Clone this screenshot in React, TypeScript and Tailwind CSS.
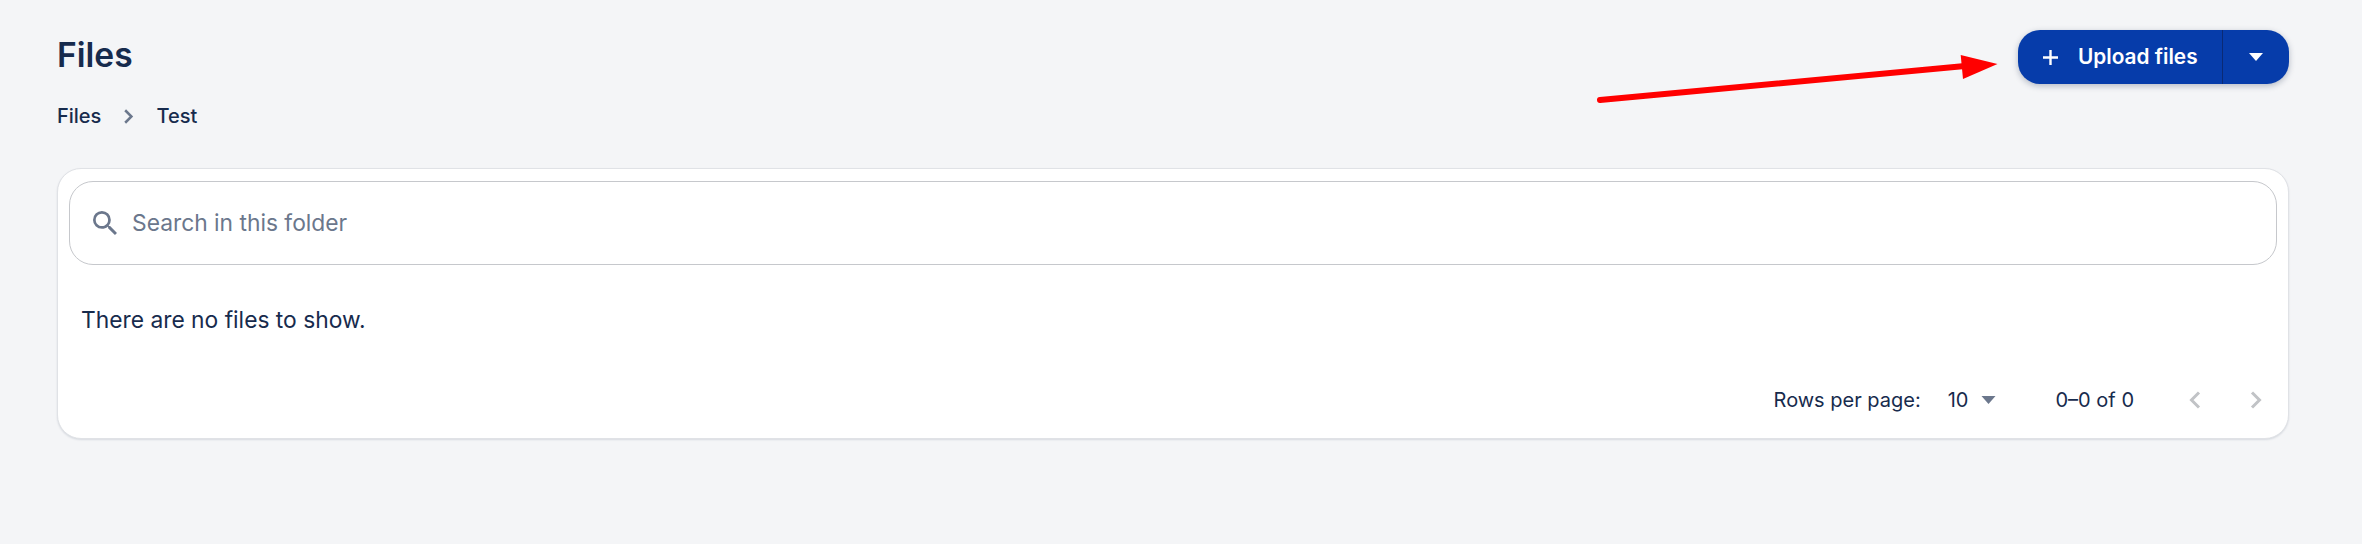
const ink = "text-[#172b4d]";

function Caret({ className }: { className: string }) {
  return (
    <svg viewBox="0 0 14 8" className={className} fill="currentColor" aria-hidden="true">
      <path d="M0 0h14L7 8z" />
    </svg>
  );
}

function Chevron({ dir, className }: { dir: "left" | "right"; className: string }) {
  return (
    <svg viewBox="0 0 12 18" className={className} fill="none" stroke="currentColor" strokeWidth="3" aria-hidden="true">
      <path d={dir === "right" ? "M2 1.5 9.5 9 2 16.5" : "M10 1.5 2.5 9 10 16.5"} />
    </svg>
  );
}

export default function App() {
  return (
    <div className={`relative h-[544px] w-[2362px] overflow-hidden bg-[#f4f5f7] pl-[57px] pr-[73px] pt-[30px] font-['Inter',sans-serif] ${ink}`}>
      <svg className="absolute left-[1590px] top-[50px] h-[60px] w-[420px]" viewBox="0 0 420 60" aria-hidden="true">
        <path d="M10 50 L375 16" stroke="#ff0000" strokeWidth="6" strokeLinecap="round" />
        <path d="M370.7 5 L407.5 14 L373 29 Z" fill="#ff0000" />
      </svg>

      <header className="flex items-start justify-between">
        <div>
          <h1 className="mt-[5px] text-[33.6px] font-semibold leading-[40px]">Files</h1>
          <nav className="mt-[29px] flex items-center text-[20px] font-medium leading-[24px]">
            <span>Files</span>
            <Chevron dir="right" className="ml-[22px] mr-[22px] h-[15px] w-[11px] text-[#6b778c]" />
            <span>Test</span>
          </nav>
        </div>
        <div className="flex h-[54px] w-[271px] items-stretch overflow-hidden rounded-[22px] bg-[#063caa] text-white shadow-[0_2px_6px_rgba(9,30,66,0.28)]">
          <button className="flex flex-1 items-center pl-[25px] text-[20.8px] font-semibold">
            <svg viewBox="0 0 15 15" className="h-[15px] w-[15px]" fill="none" stroke="currentColor" strokeWidth="2.4" aria-hidden="true">
              <path d="M7.5 0v15M0 7.5h15" />
            </svg>
            <span className="ml-[20px]">Upload files</span>
          </button>
          <button className="flex w-[67px] items-center justify-center border-l border-[#0a2a75]">
            <Caret className="h-[8px] w-[14px] text-white" />
          </button>
        </div>
      </header>

      <main className="mt-[40px] h-[271px] rounded-[24px] border border-[#e0e2e6] bg-white px-[11px] pt-[12px] shadow-[0_1px_2px_rgba(9,30,66,0.12)]">
        <div className="flex h-[84px] items-center rounded-[24px] border border-[#c6c8cc] pl-[23px]">
          <svg viewBox="3 3 17.5 17.5" className="h-[24px] w-[24px] text-[#6b778c]" fill="currentColor" aria-hidden="true">
            <path d="M15.5 14h-.79l-.28-.27A6.471 6.471 0 0 0 16 9.5 6.5 6.5 0 1 0 9.5 16c1.61 0 3.09-.59 4.23-1.57l.27.28v.79l5 4.99L20.49 19l-4.99-5zm-6 0C7.01 14 5 11.99 5 9.5S7.01 5 9.5 5 14 7.01 14 9.5 11.99 14 9.5 14z" />
          </svg>
          <span className="ml-[15px] text-[22.8px] text-[#6b778c]">Search in this folder</span>
        </div>
        <p className="ml-[12px] mt-[39px] text-[22.8px] leading-[32px]">There are no files to show.</p>
        <div className="mt-[44px] flex h-[40px] items-center justify-end pr-[15px] text-[20px]">
          <span>Rows per page:</span>
          <span className="ml-[27px]">10</span>
          <Caret className="ml-[12px] h-[8px] w-[15px] text-[#6b778c]" />
          <span className="ml-[60px]">0–0 of 0</span>
          <Chevron dir="left" className="ml-[55px] h-[18px] w-[12px] text-[#c1c3c6]" />
          <Chevron dir="right" className="ml-[49px] h-[18px] w-[12px] text-[#c1c3c6]" />
        </div>
      </main>
    </div>
  );
}
